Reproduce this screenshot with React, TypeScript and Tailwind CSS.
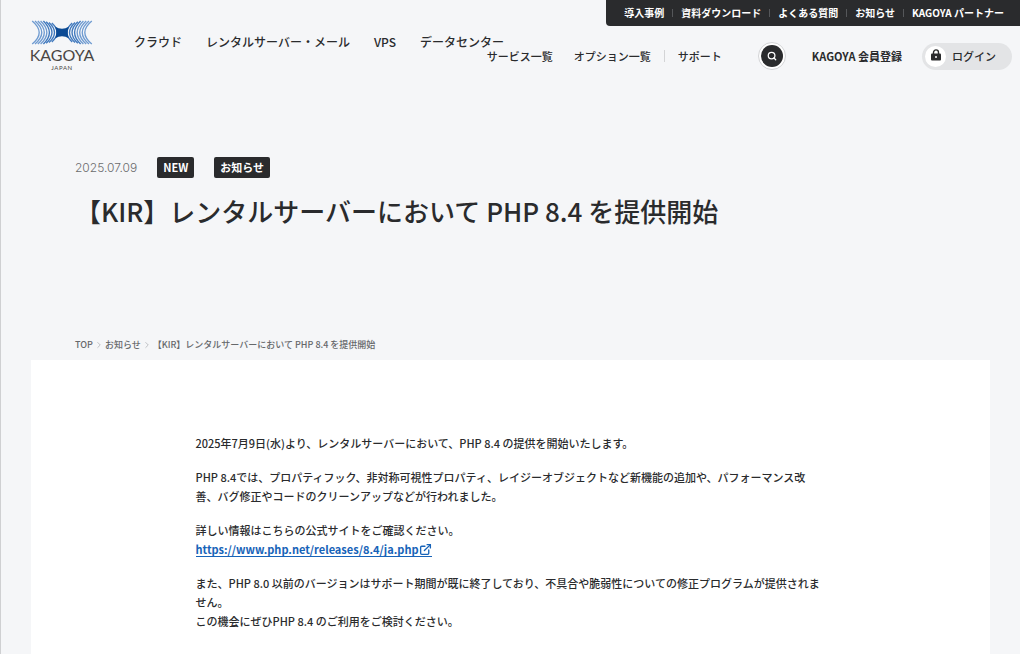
import { Fragment } from 'react'
import { ChevronRight, ExternalLink, Search } from 'lucide-react'

const topLinks = ['導入事例', '資料ダウンロード', 'よくある質問', 'お知らせ', 'KAGOYA パートナー']
const mainLinks = ['クラウド', 'レンタルサーバー・メール', 'VPS', 'データセンター']

function Logo() {
  const arcs = [0, 1, 2, 3, 4, 5, 6, 7]
  return (
    <a href="#" className="flex w-[72px] shrink-0 flex-col items-center text-[#4a4644]">
      <svg className="h-[25px] w-[62px]" viewBox="0 0 62 25" fill="none" aria-hidden="true">
        {arcs.map((i) => {
          const x = 1.2 + i * 2.8
          const top = 1 + Math.max(0, i - 4) * 0.7
          const d = `M${x} ${top}Q${x + 14 - i * 0.5} 12.5 ${x} ${25 - top}`
          const color = i < 4 ? '#6f9bd1' : '#3f78bd'
          return (
            <g key={i} stroke={color} strokeWidth={1.35}>
              <path d={d} />
              <path d={d} transform="translate(62 0) scale(-1 1)" />
            </g>
          )
        })}
        <path d="M24 6.5Q31 11 38 6.5Q35.5 12.5 38 18.5Q31 14 24 18.5Q26.5 12.5 24 6.5Z" fill="#0b4a94" />
      </svg>
      <span className="font-[Lato] text-base leading-[19px] font-normal">KAGOYA</span>
      <span className="font-[Lato] text-[6px] leading-[7px] font-normal tracking-widest">JAPAN</span>
    </a>
  )
}

function Header() {
  return (
    <header className="flex items-start whitespace-nowrap font-medium">
      <div className="flex min-w-0 flex-1 pt-5 pl-[25px]">
        <Logo />
        <nav className="ml-9 flex gap-6 pt-3 text-xs leading-5">
          {mainLinks.map((label) => (
            <a key={label} href="#">{label}</a>
          ))}
        </nav>
      </div>

      <div className="flex shrink-0 flex-col items-end">
        <nav className="flex h-[26px] items-center gap-2 rounded-bl-sm bg-[#2a2b2d] pr-4 pb-px pl-[18px] text-[10px] font-bold text-white">
          {topLinks.map((label, i) => (
            <Fragment key={label}>
              {i > 0 && <span className="h-2 w-px bg-[#55575a]" />}
              <a href="#">{label}</a>
            </Fragment>
          ))}
        </nav>
        <div className="mt-4 mr-2 flex items-center text-[11px]">
          <a href="#">サービス一覧</a>
          <a href="#" className="ml-[21px]">オプション一覧</a>
          <span className="ml-[13px] h-3 w-px bg-[#d3d4d6]" />
          <a href="#" className="ml-[13px]">サポート</a>
          <button
            aria-label="検索"
            className="ml-9 flex size-7 items-center justify-center rounded-full border border-[#d3d4d6] bg-white"
          >
            <span className="flex size-[22px] items-center justify-center rounded-full bg-[#2a2b2d] text-white">
              <Search size={10} strokeWidth={3} />
            </span>
          </button>
          <a href="#" className="ml-[26px] font-bold">KAGOYA 会員登録</a>
          <a href="#" className="ml-5 flex h-[27px] items-center gap-[6px] rounded-full bg-[#e3e4e6] pr-4 pl-[3px]">
            <span className="flex size-[21px] justify-center rounded-full bg-white pt-[3px]">
              <svg className="h-3 w-[10px]" viewBox="0 0 10 12" aria-hidden="true">
                <path d="M2.5 5V3.4a2.5 2.5 0 0 1 5 0V5" fill="none" stroke="#2a2b2d" strokeWidth="1.4" />
                <rect y="4.6" width="10" height="7" rx="1" fill="#2a2b2d" />
                <circle cx="5" cy="8" r="1" fill="#fff" />
              </svg>
            </span>
            ログイン
          </a>
        </div>
      </div>
    </header>
  )
}

export default function App() {
  return (
    <div className="min-h-screen border-l border-[#cfd0d2] bg-[#f5f6f8] font-['Noto_Sans_CJK_JP',sans-serif] text-[#2a2b2d]">
      <Header />

      <main>
        {/* Title */}
        <div className="mt-[86px] px-[74px]">
          <div className="flex items-center text-[11px] leading-[21px] font-bold text-white">
            <time className="font-[Inter] text-xs font-light text-[#6b6c6e]">2025.07.09</time>
            <span className="ml-5 rounded-xs bg-[#2a2b2d] px-[6px]">NEW</span>
            <span className="ml-5 rounded-xs bg-[#2a2b2d] px-[6px]">お知らせ</span>
          </div>
          <h1 className="mt-[15px] text-[26px] leading-9 font-medium">
            【KIR】レンタルサーバーにおいて PHP 8.4 を提供開始
          </h1>
        </div>

        {/* Breadcrumb */}
        <nav className="mt-[108px] flex items-center gap-px px-[74px] text-[9px] leading-4 font-medium text-[#66686b]">
          <a href="#">TOP</a>
          <ChevronRight size={10} className="text-[#b5b7ba]" />
          <a href="#">お知らせ</a>
          <ChevronRight size={10} className="text-[#b5b7ba]" />
          <span>【KIR】レンタルサーバーにおいて PHP 8.4 を提供開始</span>
        </nav>

        {/* Article */}
        <article className="mx-[30px] mt-[7px] bg-white px-6 pt-[74px] pb-6">
          <div className="mx-auto max-w-[630px] space-y-[15px] text-[11px] leading-[19px] font-medium">
            <p>2025年7月9日(水)より、レンタルサーバーにおいて、PHP 8.4 の提供を開始いたします。</p>
            <p>
              PHP 8.4では、プロパティフック、非対称可視性プロパティ、レイジーオブジェクトなど新機能の追加や、パフォーマンス改善、バグ修正やコードのクリーンアップなどが行われました。
            </p>
            <p>
              詳しい情報はこちらの公式サイトをご確認ください。
              <br />
              <a
                href="https://www.php.net/releases/8.4/ja.php"
                className="inline-flex items-center border-b border-[#1763b8] leading-[14px] font-bold text-[#1763b8]"
              >
                https://www.php.net/releases/8.4/ja.php
                <ExternalLink size={13} strokeWidth={2.5} />
              </a>
            </p>
            <p>
              また、PHP 8.0 以前のバージョンはサポート期間が既に終了しており、不具合や脆弱性についての修正プログラムが提供されません。
              <br />
              この機会にぜひPHP 8.4 のご利用をご検討ください。
            </p>
          </div>
        </article>
      </main>
    </div>
  )
}
